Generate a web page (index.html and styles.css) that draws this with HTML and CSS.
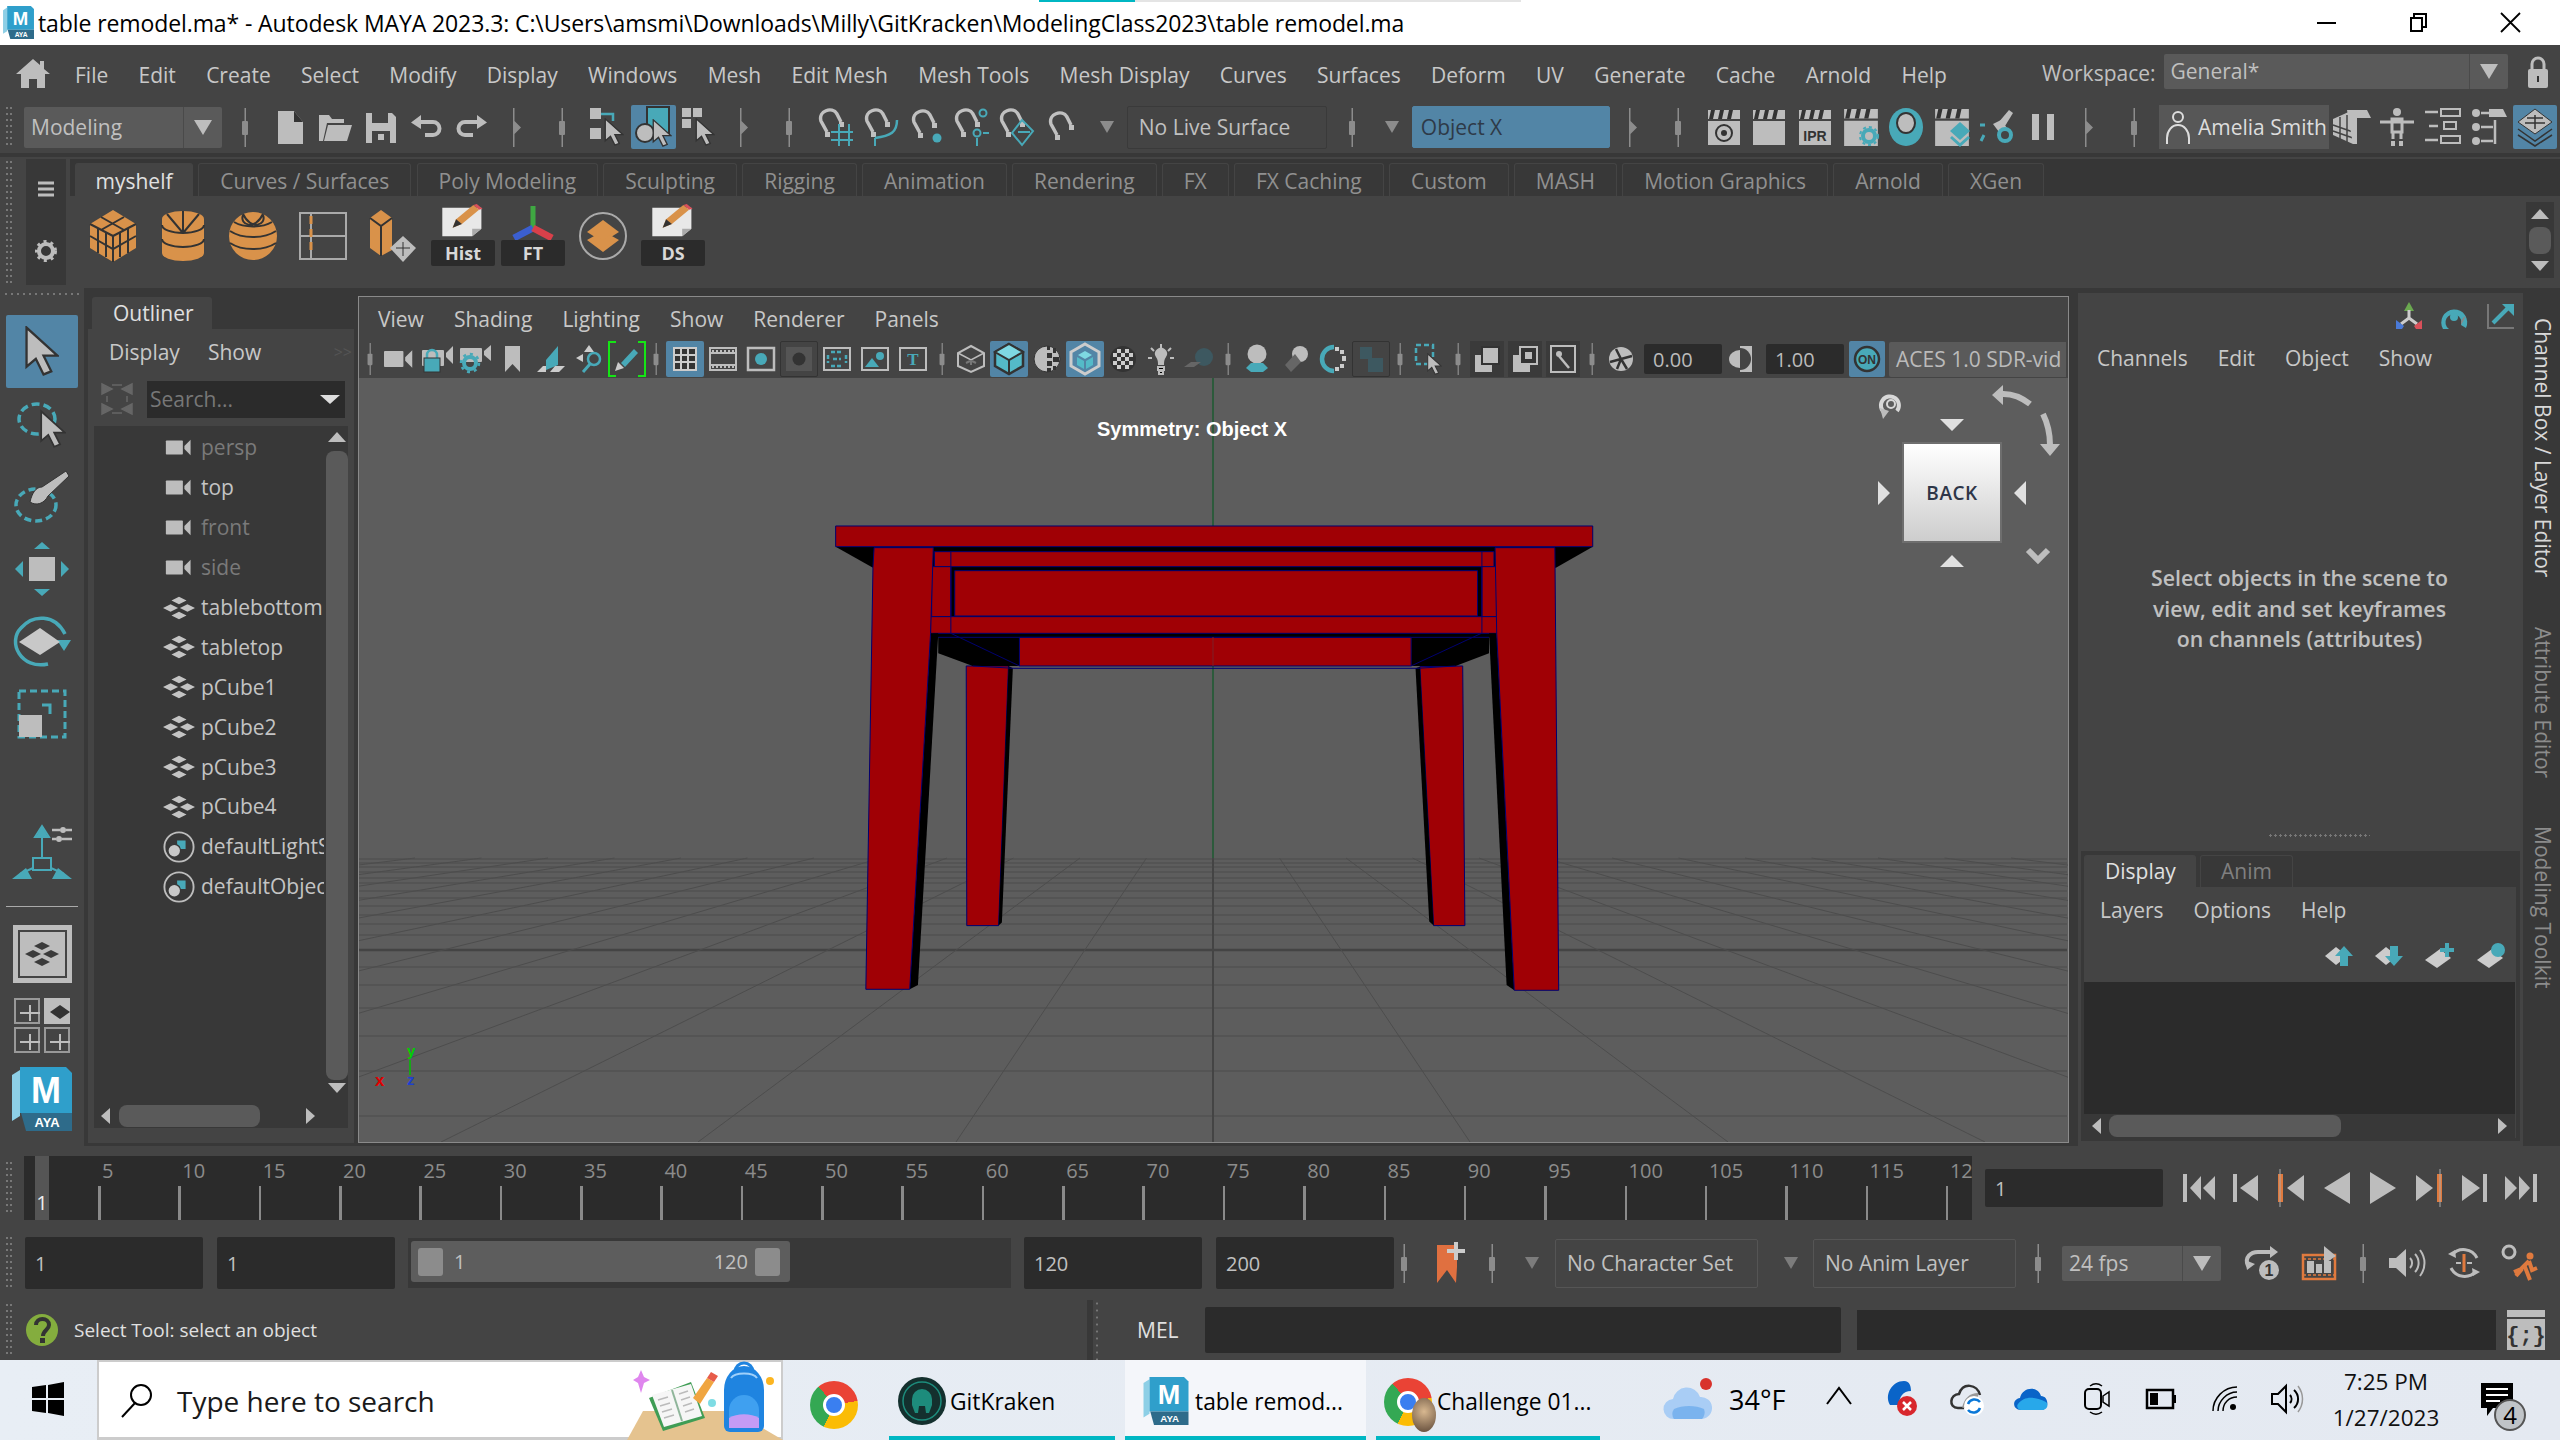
FILE: index.html
```
<!DOCTYPE html>
<html lang="en">
<head>
<meta charset="utf-8">
<title>table remodel.ma - Autodesk MAYA</title>
<link rel="stylesheet" href="styles.css">
</head>
<body>
<svg class="defs" width="0" height="0">
  <symbol id="sep" viewBox="0 0 6 39"><rect x="2.5" width="1.5" height="39" fill="#8c8c8c"/><rect y="13" width="6" height="14" rx="1" fill="#8c8c8c"/></symbol>
  <symbol id="chev" viewBox="0 0 8 39"><path d="M0 0h1.5v13L8 19.500 1.500 26v13H0z" fill="#8c8c8c"/></symbol>
  <symbol id="arrow" viewBox="0 0 22 32"><path d="M1 1v25l6-5 5 10 5-2-5-10h9z" fill="#bdbdbd" stroke="#333" stroke-width="1.500"/></symbol>
  <symbol id="magnet" viewBox="0 0 28 30"><path d="M10 24 4 13C1 3 15-2 20 6l4 8" fill="none" stroke="#c0c0c0" stroke-width="3.500"/><path d="M8 24h5v5H8zM22 14h5v5h-5z" fill="#c0c0c0"/></symbol>
  <symbol id="clap" viewBox="0 0 34 36"><path d="M1 1h32v9H1z" fill="#bdbdbd"/><path d="M4 1 2 10h4l2-9zM13 1l-2 9h4l2-9zM22 1l-2 9h4l2-9z" fill="#333"/><path d="M1 12h32v24H1z" fill="#bdbdbd"/></symbol>
  <symbol id="cam" viewBox="0 0 34 22"><rect y="2" width="22" height="18" rx="1" fill="#bdbdbd"/><path d="M32 1v20l-8-8v-4z" fill="#bdbdbd"/></symbol>
  <symbol id="xform" viewBox="0 0 34 24"><path d="M17 0l8 4-8 4-8-4zM8 8l8 4-8 4-8-4zM26 8l8 4-8 4-8-4zM17 16l8 4-8 4-8-4z" fill="#c4c4c4"/></symbol>
  <symbol id="set" viewBox="0 0 34 34"><circle cx="17" cy="17" r="15.500" fill="none" stroke="#bdbdbd" stroke-width="2"/><circle cx="12" cy="21" r="6" fill="#c8c8c8"/><path d="M15 10h9v9h-5a7 7 0 0 0-4-5z" fill="#48a9b8"/></symbol>
  <symbol id="maya" viewBox="0 0 60 64"><path d="M0 8 8 3v46l-8 5z" fill="#8dcfe6"/><path d="M8 0h46l6 6v40H8z" fill="#2f9fcb"/><path d="M9 46h51v18H14z" fill="#2e6b8a"/><text x="34" y="36" class="mayam">M</text><text x="35" y="60" class="mayaa">AYA</text></symbol>
  <symbol id="pencil" viewBox="0 0 40 38" preserveAspectRatio="none"><path d="M2 4h34v22l-8 8H2z" fill="#e8e8e8"/><path d="M28 34v-8h8z" fill="#aaa"/><path d="M11 25l3-9L29 1l5 5-15 15z" fill="#d9924a"/><path d="M29 1l3-1 5 5-3 1z" fill="#d8505a"/><path d="M11 25l3-9 5 5z" fill="#333"/></symbol>
</svg>

<header class="title">
  <svg class="title-logo" width="31" height="33"><use href="#maya"/></svg>
  <span class="title-text">table remodel.ma* - Autodesk MAYA 2023.3: C:\Users\amsmi\Downloads\Milly\GitKracken\ModelingClass2023\table remodel.ma</span>
  <div class="winbtns">
    <svg width="21" height="21"><path d="M1 11h19" stroke="#000" stroke-width="2"/></svg>
    <svg width="21" height="21"><path d="M3 6h11v13H3zM6 6V2h12v13h-4" fill="none" stroke="#000" stroke-width="2"/></svg>
    <svg width="21" height="21"><path d="M1 1l19 19M20 1 1 20" stroke="#000" stroke-width="1.800"/></svg>
  </div>
</header>
<div class="tabstrip"><i class="strip-a"></i><i class="strip-b"></i></div>

<nav class="menubar">
  <svg class="home" width="34" height="30"><path d="M17 1 0 16h5v14h8v-9h8v9h8V16h5l-6-5V3h-4v4z" fill="#bdbdbd"/></svg>
  <div class="menus"><span>File</span><span>Edit</span><span>Create</span><span>Select</span><span>Modify</span><span>Display</span><span>Windows</span><span>Mesh</span><span>Edit Mesh</span><span>Mesh Tools</span><span>Mesh Display</span><span>Curves</span><span>Surfaces</span><span>Deform</span><span>UV</span><span>Generate</span><span>Cache</span><span>Arnold</span><span>Help</span></div>
  <span class="ws-label">Workspace:</span>
  <div class="combo ws"><span>General*</span><b><i class="tri"></i></b></div>
  <svg class="lock" width="20" height="32"><path d="M4 15V8a6 6 0 0 1 12 0v7" fill="none" stroke="#bdbdbd" stroke-width="3"/><rect y="13" width="20" height="19" rx="2" fill="#bdbdbd"/><rect x="9" y="20" width="2" height="6" fill="#333"/></svg>
</nav>

<div class="status">
  <i class="grip"></i>
  <div class="combo mode"><span>Modeling</span><b><i class="tri"></i></b></div>
  <div class="slots a">
    <div class="s"><svg width="6" height="39"><use href="#sep"/></svg></div>
    <div class="s"><svg width="25" height="33"><path d="M0 0h16l9 11v22H0z" fill="#bdbdbd"/><path d="M16 0v11h9z" fill="#333"/></svg></div>
    <div class="s"><svg width="34" height="30"><path d="M1 29V3h10l3 4h12v4H9L5 29z" fill="#bdbdbd"/><path d="M10 13h24l-5 16H6z" fill="#bdbdbd"/></svg></div>
    <div class="s"><svg width="30" height="32"><path d="M0 2h26l4 4v26H0z" fill="#bdbdbd"/><path d="M6 2h16v10H6z" fill="#444"/><path d="M6 20h18v12H6z" fill="#444"/><path d="M12 23h6v6h-6z" fill="#bdbdbd"/></svg></div>
    <div class="s"><svg width="33" height="24"><path d="M11 0v5h12a8.500 8.500 0 0 1 0 17h-8v-4h8a4.500 4.500 0 0 0 0-9H11v5L1 7.500z" fill="#bdbdbd"/></svg></div>
    <div class="s"><svg width="33" height="24"><path d="M22 0v5H10a8.500 8.500 0 0 0 0 17h8v-4h-8a4.500 4.500 0 0 1 0-9h12v5l10-6.500z" fill="#bdbdbd"/></svg></div>
    <div class="s"><svg width="8" height="39"><use href="#chev"/></svg></div>
    <div class="s"><svg width="6" height="39"><use href="#sep"/></svg></div>
    <div class="s"><svg width="36" height="38"><rect width="11" height="11" fill="#bdbdbd"/><rect y="20" width="11" height="11" fill="#bdbdbd"/><path d="M11 6h12v7" fill="none" stroke="#48a9b8" stroke-width="2.500"/><use href="#arrow" x="14" y="10" width="20" height="28"/></svg></div>
    <div class="s on"><svg width="38" height="40"><rect x="13" width="22" height="28" fill="#48a9b8" stroke="#333" stroke-width="2"/><circle cx="11" cy="26" r="9" fill="#bdbdbd" stroke="#333" stroke-width="2"/><use href="#arrow" x="18" y="12" width="20" height="28"/></svg></div>
    <div class="s"><svg width="34" height="38"><rect width="9" height="9" fill="#bdbdbd"/><rect x="11" width="9" height="9" fill="#bdbdbd"/><rect y="11" width="9" height="9" fill="#bdbdbd"/><use href="#arrow" x="13" y="10" width="20" height="28"/></svg></div>
    <div class="s"><svg width="8" height="39"><use href="#chev"/></svg></div>
    <div class="s"><svg width="6" height="39"><use href="#sep"/></svg></div>
    <div class="s"><svg width="36" height="38"><use href="#magnet" width="28" height="30"/><path d="M22 16v22M32 16v22M14 24h22M14 32h22" stroke="#48a9b8" stroke-width="2" fill="none"/></svg></div>
    <div class="s"><svg width="34" height="38"><use href="#magnet" width="28" height="30"/><path d="M34 12c0 12-6 16-22 18" stroke="#48a9b8" stroke-width="2.500" fill="none"/><path d="M12 30v8" stroke="#48a9b8" stroke-width="2"/></svg></div>
    <div class="s"><svg width="32" height="36"><use href="#magnet" width="28" height="30"/><circle cx="27" cy="29" r="4.500" fill="#48a9b8"/></svg></div>
    <div class="s"><svg width="36" height="38"><use href="#magnet" width="28" height="30"/><circle cx="30" cy="5" r="3.500" fill="none" stroke="#48a9b8" stroke-width="2"/><circle cx="24" cy="25" r="3.500" fill="none" stroke="#48a9b8" stroke-width="2"/><path d="M30 25h6M24 30v8" stroke="#48a9b8" stroke-width="2"/></svg></div>
    <div class="s"><svg width="36" height="38"><use href="#magnet" width="28" height="30"/><path d="M24 12l11 11-11 14-10-12zM20 24h12" fill="none" stroke="#48a9b8" stroke-width="2"/></svg></div>
    <div class="s"><svg width="30" height="32"><use href="#magnet" width="28" height="30"/></svg></div>
    <div class="s"><i class="tri small"></i></div>
  </div>
  <div class="box nolive">No Live Surface</div>
  <div class="slot-sep"><svg width="6" height="39"><use href="#sep"/></svg></div>
  <i class="tri small"></i>
  <div class="box objx">Object X</div>
  <div class="slots b">
    <div class="s"><svg width="8" height="39"><use href="#chev"/></svg></div>
    <div class="s"><svg width="6" height="39"><use href="#sep"/></svg></div>
    <div class="s"><svg width="34" height="36"><use href="#clap"/><circle cx="17" cy="24" r="8" fill="none" stroke="#333" stroke-width="2"/><circle cx="17" cy="24" r="3" fill="#333"/></svg></div>
    <div class="s"><svg width="34" height="36"><use href="#clap"/></svg></div>
    <div class="s"><svg width="34" height="36"><use href="#clap"/><text x="17" y="32" class="ipr">IPR</text></svg></div>
    <div class="s"><svg width="36" height="38"><use href="#clap"/><circle cx="26" cy="28" r="6" fill="none" stroke="#48a9b8" stroke-width="4"/><circle cx="26" cy="28" r="9" fill="none" stroke="#48a9b8" stroke-width="2" stroke-dasharray="3 3"/></svg></div>
    <div class="s"><svg width="34" height="38"><ellipse cx="17" cy="19" rx="17" ry="19" fill="#48a9b8"/><ellipse cx="17" cy="15" rx="9" ry="10" fill="#bdbdbd" stroke="#333" stroke-width="2"/></svg></div>
    <div class="s"><svg width="36" height="38"><use href="#clap"/><path d="M26 14l10 9-10 9-10-9z" fill="#48a9b8"/><path d="M17 29l9 8 9-8" fill="none" stroke="#48a9b8" stroke-width="3"/></svg></div>
    <div class="s"><svg width="36" height="38"><path d="M19 15 30 2l4 3-8 13z" fill="#bdbdbd"/><path d="M14 16l8-4 6 8-8 4z" fill="#bdbdbd"/><circle cx="26" cy="27" r="6" fill="none" stroke="#48a9b8" stroke-width="4"/><path d="M1 17h5M5 27l-3 6" stroke="#48a9b8" stroke-width="3"/></svg></div>
    <div class="s"><svg width="22" height="26"><path d="M0 0h7v26H0zM15 0h7v26h-7z" fill="#bdbdbd"/></svg></div>
    <div class="s"><svg width="8" height="39"><use href="#chev"/></svg></div>
    <div class="s"><svg width="6" height="39"><use href="#sep"/></svg></div>
  </div>
  <div class="user"><svg width="24" height="34"><circle cx="12" cy="7" r="5" fill="none" stroke="#ddd" stroke-width="2"/><path d="M1 34v-6a11 13 0 0 1 22 0v6" fill="none" stroke="#ddd" stroke-width="2"/></svg><span>Amelia Smith</span></div>
  <div class="slots c">
    <div class="s"><svg width="38" height="38"><path d="M0 11 20 2v34L0 27z" fill="#bdbdbd"/><path d="M0 17l20 7M0 23l20 7M7 9v24M14 7v28" stroke="#444" stroke-width="1.500"/><path d="M14 2h20l4 8H24v26h-4z" fill="#bdbdbd"/></svg></div>
    <div class="s"><svg width="34" height="38"><circle cx="17" cy="4" r="4" fill="#bdbdbd"/><path d="M0 14h34M12 11h10v13H12zM13 24v7M21 24v7" stroke="#bdbdbd" stroke-width="3" fill="none"/><rect x="11" y="33" width="4" height="5" fill="#bdbdbd"/><rect x="19" y="33" width="4" height="5" fill="#bdbdbd"/></svg></div>
    <div class="s"><svg width="36" height="38"><path d="M0 4h13M0 32h13M4 18h9" stroke="#bdbdbd" stroke-width="2.500"/><rect x="16" y="1" width="19" height="7" fill="none" stroke="#bdbdbd" stroke-width="2"/><rect x="16" y="28" width="19" height="7" fill="none" stroke="#bdbdbd" stroke-width="2"/><rect x="19" y="14" width="12" height="7" fill="none" stroke="#bdbdbd" stroke-width="2"/></svg></div>
    <div class="s"><svg width="36" height="38"><circle cx="5" cy="5" r="4" fill="#bdbdbd"/><circle cx="5" cy="19" r="4" fill="#bdbdbd"/><circle cx="5" cy="33" r="4" fill="#bdbdbd"/><path d="M10 5h10M10 19h12M10 33h12M24 12v24" stroke="#bdbdbd" stroke-width="2.500"/><path d="M18 1h14l4 8H18z" fill="#bdbdbd"/></svg></div>
    <div class="s on wide"><svg width="36" height="38"><path d="M18 1l17 13-17 12L1 14z" fill="#bdbdbd" stroke="#333"/><path d="M1 21l17 12 17-12M1 27l17 11 17-11M10 10h16M8 15h20M18 7v14" fill="none" stroke="#333" stroke-width="1.500"/></svg></div>
  </div>
</div>
<div class="rule"></div>

<section class="shelf">
  <i class="grip tall"></i>
  <div class="shelf-side">
    <svg width="16" height="16"><path d="M0 2h16M0 8h16M0 14h16" stroke="#bdbdbd" stroke-width="3"/></svg>
    <svg width="22" height="22"><circle cx="11" cy="11" r="7" fill="none" stroke="#bdbdbd" stroke-width="4"/><circle cx="11" cy="11" r="9.500" fill="none" stroke="#bdbdbd" stroke-width="3" stroke-dasharray="3 4"/></svg>
  </div>
  <div class="shelf-main">
    <div class="tabs"><span class="tab on">myshelf</span><span class="tab">Curves / Surfaces</span><span class="tab">Poly Modeling</span><span class="tab">Sculpting</span><span class="tab">Rigging</span><span class="tab">Animation</span><span class="tab">Rendering</span><span class="tab">FX</span><span class="tab">FX Caching</span><span class="tab">Custom</span><span class="tab">MASH</span><span class="tab">Motion Graphics</span><span class="tab">Arnold</span><span class="tab">XGen</span></div>
    <div class="shelf-body">
      <div class="shelf-icons">
        <div class="sh"><svg width="46" height="52"><path d="M23 0 46 14v24L23 52 0 38V14z" fill="#d9924a"/><path d="M23 26 0 14M23 26l23-12M23 26v26M11 7l23 13M34 7 11 20M8 19v24M16 23v24M38 19v24M30 23v24M0 26l23 13 23-13" stroke="#333" stroke-width="2" fill="none"/></svg></div>
        <div class="sh"><svg width="42" height="50"><path d="M0 8a21 8 0 0 1 42 0v34a21 8 0 0 1-42 0z" fill="#d9924a"/><path d="M0 14a21 8 0 0 0 42 0M0 28a21 8 0 0 0 42 0M21 0v22M5 3l16 19M37 3 21 22" stroke="#333" stroke-width="2" fill="none"/></svg></div>
        <div class="sh"><svg width="48" height="48"><ellipse cx="24" cy="24" rx="24" ry="24" fill="#d9924a"/><path d="M1 19c12 8 34 8 46 0M1 31c12 8 34 8 46 0M5 10c10 6 28 6 38 0M14 3c-4 10 12 16 20-1M34 3C38 13 22 19 14 2" stroke="#333" stroke-width="2" fill="none"/></svg></div>
        <div class="sh"><svg width="48" height="48"><path d="M1 1h46v46H1zM12 1v46M1 24h46" fill="none" stroke="#aaa" stroke-width="2"/><path d="M12 4v8M12 17v8M12 30v8" stroke="#d9924a" stroke-width="3"/></svg></div>
        <div class="sh"><svg width="46" height="52"><path d="M0 8 11 0l11 8v32L11 46 0 38z" fill="#d9924a"/><path d="M0 8l11 8 11-8M11 16v30" stroke="#333" stroke-width="2" fill="none"/><path d="M33 26l13 12-13 14-13-14z" fill="#bdbdbd"/><path d="M26 38h14M33 32v14" stroke="#333"/></svg></div>
        <div class="sh tool"><svg width="46" height="36"><use href="#pencil" width="46" height="36"/></svg><b>Hist</b></div>
        <div class="sh tool"><svg width="46" height="36"><path d="M23 2v22" stroke="#3fa842" stroke-width="5"/><path d="M23 24 4 34" stroke="#3b5fd0" stroke-width="7"/><path d="M23 24l19 10" stroke="#d9404a" stroke-width="7"/></svg><b>FT</b></div>
        <div class="sh"><svg width="48" height="48"><circle cx="24" cy="24" r="23" fill="none" stroke="#aaa" stroke-width="2"/><path d="M24 8l16 12-16 10L8 20z" fill="#d9924a"/><path d="M8 28l16 12 16-12-9-5-7 5-7-5z" fill="#d9924a"/></svg></div>
        <div class="sh tool"><svg width="46" height="36"><use href="#pencil" width="46" height="36"/></svg><b>DS</b></div>
      </div>
      <div class="shelf-scroll"><i class="up"></i><b></b><i class="down"></i></div>
    </div>
  </div>
</section>

<main class="main">
  <aside class="toolbox">
    <div class="grip-h"></div>
    <div class="tool-cell on"><svg width="34" height="50" viewBox="0 0 22 32" preserveAspectRatio="none"><use href="#arrow"/></svg></div>
    <div class="tool-cell"><svg width="50" height="54"><ellipse cx="20" cy="22" rx="18" ry="15" fill="none" stroke="#48a9b8" stroke-width="3.500" stroke-dasharray="8 4"/><use href="#arrow" x="23" y="10" width="26" height="44"/></svg></div>
    <div class="tool-cell"><svg width="56" height="54"><ellipse cx="22" cy="36" rx="20" ry="16" fill="none" stroke="#48a9b8" stroke-width="3.500" stroke-dasharray="7 4"/><path d="M16 33c6 4 14 2 18-6l21-20-3-5-24 16c-6 0-10 6-12 15z" fill="#bdbdbd" stroke="#333"/></svg></div>
    <div class="tool-cell"><svg width="56" height="56"><rect x="15" y="16" width="26" height="24" fill="#bdbdbd"/><path d="M28 1l8 7H20zM28 55l8-7H20zM1 28l8-8v16zM55 28l-8-8v16z" fill="#48a9b8"/></svg></div>
    <div class="tool-cell"><svg width="58" height="56"><path d="M35 50C8 56-6 28 8 14 20 0 42 0 52 20" fill="none" stroke="#48a9b8" stroke-width="3.500"/><path d="M44 26h14l-7 11z" fill="#48a9b8"/><path d="M27 14l20 14-20 13L6 28z" fill="#c8c8c8"/></svg></div>
    <div class="tool-cell"><svg width="50" height="50"><rect x="2" y="2" width="46" height="46" fill="none" stroke="#48a9b8" stroke-width="3" stroke-dasharray="7 4"/><rect x="2" y="26" width="23" height="22" fill="#bdbdbd"/><path d="M25 16h8v9" fill="none" stroke="#48a9b8" stroke-width="3"/></svg></div>
    <div class="tool-cell uni"><svg width="60" height="54"><path d="M30 0l7 11H23zM30 11v20M21 32h18v12H21zM21 42 8 48M39 42l13 6" stroke="#48a9b8" stroke-width="2" fill="none"/><path d="M30 0l6 11H24zM0 53l14-11 6 11zM60 53 46 42l-6 11z" fill="#48a9b8"/><path d="M40 4h8M54 4h6M40 13h4M50 13h10" stroke="#bdbdbd" stroke-width="2.500"/><circle cx="51" cy="4" r="3" fill="#bdbdbd"/><circle cx="47" cy="13" r="3" fill="#bdbdbd"/></svg></div>
    <div class="tool-rule"></div>
    <div class="objmode"><svg width="34" height="24"><use href="#xform"/></svg></div>
    <div class="quad"><span><svg width="20" height="16"><path d="M10 0v16M0 8h20" stroke="#bdbdbd" stroke-width="2"/></svg></span><span class="lit"><svg width="20" height="14"><path d="M10 0l10 7-10 7L0 7z" fill="#333"/></svg></span><span><svg width="20" height="16"><path d="M10 0v16M0 8h20" stroke="#bdbdbd" stroke-width="2"/></svg></span><span><svg width="20" height="16"><path d="M10 0v16M0 8h20" stroke="#bdbdbd" stroke-width="2"/></svg></span></div>
    <svg class="logo" width="60" height="64"><use href="#maya"/></svg>
  </aside>

  <section class="outliner">
    <div class="ol-tab">Outliner</div>
    <div class="ol-panel">
      <div class="ol-menu"><span>Display</span><span>Show</span><em>&gt;&gt;</em></div>
      <div class="ol-search">
        <svg width="30" height="30"><path d="M0 0l10 5-10 5zM30 0 20 5l10 5zM0 20l10 5-10 5zM30 20l-10 5 10 5zM5 12v6M25 12v6M10 1h10M10 29h10" fill="#666" stroke="#666" stroke-width="1.500"/></svg>
        <div class="searchbox"><span>Search...</span><i class="tri light"></i></div>
      </div>
      <div class="ol-list">
        <ul class="rows">
          <li class="dim"><svg width="32" height="17"><use href="#cam"/></svg><span>persp</span></li>
          <li><svg width="32" height="17"><use href="#cam"/></svg><span>top</span></li>
          <li class="dim"><svg width="32" height="17"><use href="#cam"/></svg><span>front</span></li>
          <li class="dim"><svg width="32" height="17"><use href="#cam"/></svg><span>side</span></li>
          <li><svg width="32" height="24"><use href="#xform"/></svg><span>tablebottom</span></li>
          <li><svg width="32" height="24"><use href="#xform"/></svg><span>tabletop</span></li>
          <li><svg width="32" height="24"><use href="#xform"/></svg><span>pCube1</span></li>
          <li><svg width="32" height="24"><use href="#xform"/></svg><span>pCube2</span></li>
          <li><svg width="32" height="24"><use href="#xform"/></svg><span>pCube3</span></li>
          <li><svg width="32" height="24"><use href="#xform"/></svg><span>pCube4</span></li>
          <li><svg width="32" height="32"><use href="#set"/></svg><span>defaultLightS</span></li>
          <li><svg width="32" height="32"><use href="#set"/></svg><span>defaultObjec</span></li>
        </ul>
        <div class="vscroll"><i class="up"></i><b></b><i class="down"></i></div>
        <div class="hscroll"><i class="left"></i><b></b><i class="right"></i></div>
      </div>
    </div>
  </section>

  <section class="viewpanel">
    <div class="vp-menu"><span>View</span><span>Shading</span><span>Lighting</span><span>Show</span><span>Renderer</span><span>Panels</span></div>
    <div class="vp-tools">
      <div class="d"><svg width="6" height="32"><use href="#sep" width="6" height="32"/></svg></div>
      <div class="v"><svg width="30" height="22"><use href="#cam" width="30" height="22"/></svg></div>
      <div class="v"><svg width="32" height="30"><rect x="1" y="6" width="22" height="16" rx="1" fill="#bdbdbd"/><path d="M32 2v18l-7-7V9z" fill="#bdbdbd"/><path d="M6 14v-3a5 5 0 0 1 10 0v3" fill="none" stroke="#48a9b8" stroke-width="2.500"/><rect x="3" y="14" width="16" height="14" fill="#48a9b8" stroke="#333"/></svg></div>
      <div class="v"><svg width="32" height="30"><rect x="1" y="4" width="22" height="14" rx="1" fill="#bdbdbd"/><path d="M32 1v16l-7-6V7z" fill="#bdbdbd"/><circle cx="11" cy="19" r="6" fill="none" stroke="#48a9b8" stroke-width="4"/><circle cx="11" cy="19" r="9" fill="none" stroke="#48a9b8" stroke-width="2.500" stroke-dasharray="3 4"/></svg></div>
      <div class="v"><svg width="16" height="26"><path d="M0 0h15v26l-7.500-8L0 26z" fill="#bdbdbd"/></svg></div>
      <div class="v"><svg width="30" height="26"><path d="M10 14 22 0v19l-12 5z" fill="#48a9b8"/><path d="M1 26l6-6h3v6zM14 26l5-6h10l-6 6z" fill="#ccc"/></svg></div>
      <div class="v"><svg width="28" height="30"><path d="M9 8l5-7 5 7zM1 14l7-4v8z" fill="#ccc"/><circle cx="19" cy="15" r="6" fill="none" stroke="#48a9b8" stroke-width="2.500"/><path d="M15 20l-7 8" stroke="#48a9b8" stroke-width="3"/></svg></div>
      <div class="v lit"><svg width="26" height="26"><path d="M7 17 20 3l4 4-13 14z" fill="#48a9b8"/><path d="M1 25l3-9 6 6z" fill="#ccc"/></svg></div>
      <div class="d"><svg width="6" height="32"><use href="#sep" width="6" height="32"/></svg></div>
      <div class="v on"><svg width="26" height="26"><rect x="1" y="1" width="24" height="24" fill="#333"/><path d="M2 2h22v22H2zM9 2v22M16 2v22M2 9h22M2 16h22" fill="none" stroke="#ccc" stroke-width="2"/></svg></div>
      <div class="v"><svg width="28" height="24"><rect x="1" y="1" width="26" height="22" fill="none" stroke="#bdbdbd" stroke-width="2"/><path d="M2 6h24M2 18h24" stroke="#bdbdbd" stroke-width="2"/><path d="M3 4h22M3 20h22" stroke="#bdbdbd" stroke-width="2" stroke-dasharray="2 2"/></svg></div>
      <div class="v"><svg width="28" height="24"><rect x="1" y="1" width="26" height="22" fill="none" stroke="#bdbdbd" stroke-width="2.500"/><circle cx="14" cy="12" r="6" fill="#48a9b8"/></svg></div>
      <div class="v off"><svg width="26" height="24"><rect width="26" height="24" fill="#555"/><circle cx="13" cy="12" r="6.500" fill="#333"/></svg></div>
      <div class="v"><svg width="28" height="24"><rect x="1" y="1" width="26" height="22" fill="none" stroke="#bdbdbd" stroke-width="2"/><path d="M8 5h12M8 19h12M5 8v8M23 8v8M10 12h8" stroke="#48a9b8" stroke-width="2.500" stroke-dasharray="4 2"/></svg></div>
      <div class="v"><svg width="28" height="24"><rect x="1" y="1" width="26" height="22" fill="none" stroke="#bdbdbd" stroke-width="2"/><path d="M4 20l7-9 7 9z" fill="#48a9b8"/><circle cx="19" cy="9" r="4" fill="#48a9b8"/></svg></div>
      <div class="v"><svg width="28" height="24"><rect x="1" y="1" width="26" height="22" fill="none" stroke="#bdbdbd" stroke-width="2"/><text x="14" y="18" class="tee">T</text></svg></div>
      <div class="d"><svg width="6" height="32"><use href="#sep" width="6" height="32"/></svg></div>
      <div class="v"><svg width="28" height="28"><path d="M14 1l13 7v13l-13 6-13-6V8z" fill="none" stroke="#bdbdbd" stroke-width="2"/><path d="M1 8l13 7 13-7" fill="none" stroke="#bdbdbd" stroke-width="1.500"/><path d="M14 15v5M9 18l4-2M19 18l-4-2" stroke="#777" stroke-width="2"/></svg></div>
      <div class="v on"><svg width="30" height="32"><path d="M15 1l14 8v14l-14 8-14-8V9z" fill="#54bac8" stroke="#333" stroke-width="2.500"/><path d="M15 1l14 8-14 8L1 9z" fill="#7ed8e2" stroke="#333" stroke-width="2"/><path d="M15 17v14" stroke="#333" stroke-width="2"/></svg></div>
      <div class="v"><svg width="28" height="28"><circle cx="14" cy="14" r="13" fill="#bdbdbd" stroke="#333"/><path d="M14 1h3v4h-3zM20 3h3v5h-3zM14 8h5v5h-5zM20 12h6v5h-6zM14 16h5v5h-5zM20 21h3v4h-3zM14 23h4v4h-4z" fill="#333"/></svg></div>
      <div class="v on"><svg width="30" height="32"><path d="M15 1l14 8v14l-14 8-14-8V9z" fill="none" stroke="#ccc" stroke-width="3"/><path d="M15 8l7 4-7 4-7-4z" fill="#7ed8e2"/><path d="M7 14l7 4v8l-7-4zM23 14l-7 4v8l7-4z" fill="#54bac8"/></svg></div>
      <div class="v"><svg width="28" height="28"><circle cx="14" cy="14" r="13" fill="#333"/><path d="M8 4h4v4H8zM16 4h4v4h-4zM4 8h4v4H4zM12 8h4v4h-4zM20 8h4v4h-4zM8 12h4v4H8zM16 12h4v4h-4zM4 16h4v4H4zM12 16h4v4h-4zM20 16h4v4h-4zM8 20h4v4H8zM16 20h4v4h-4z" fill="#ccc"/></svg></div>
      <div class="v"><svg width="26" height="30"><path d="M8 13a6 6 0 1 1 10 0c-2 3-2 5-2 8h-6c0-3 0-5-2-8z" fill="#bdbdbd"/><path d="M10 23h6v3h-6zM11 27h4v3h-4zM13 0v4M3 4l3 3M23 4l-3 3M0 14h4M22 14h4" stroke="#bdbdbd" stroke-width="2"/></svg></div>
      <div class="v"><svg width="30" height="24"><circle cx="20" cy="10" r="9" fill="#3d5860"/><path d="M0 20l7-5h10l-7 5z" fill="#666"/></svg></div>
      <div class="d"><svg width="6" height="32"><use href="#sep" width="6" height="32"/></svg></div>
      <div class="v"><svg width="28" height="30"><circle cx="14" cy="10" r="9.500" fill="#bdbdbd"/><path d="M3 24l5-5h12l5 5-5 4H8z" fill="#48a9b8"/></svg></div>
      <div class="v"><svg width="28" height="28"><circle cx="19" cy="9" r="8" fill="#bdbdbd"/><path d="M4 20 14 9 20 17 10 27z" fill="#666"/></svg></div>
      <div class="v"><svg width="26" height="28"><path d="M14 2A12 12 0 0 0 14 26" fill="none" stroke="#48a9b8" stroke-width="4.500"/><path d="M15 2h4v4h-4zM20 5h4v4h-4zM22 11h4v5h-4zM20 19h4v4h-4zM15 22h4v4h-4z" fill="#ccc"/></svg></div>
      <div class="v off"><svg width="26" height="26"><rect x="2" y="1" width="12" height="12" fill="#3d5860"/><rect x="10" y="12" width="15" height="14" fill="#3d5860"/></svg></div>
      <div class="d"><svg width="6" height="32"><use href="#sep" width="6" height="32"/></svg></div>
      <div class="v"><svg width="28" height="32"><rect x="1" y="2" width="17" height="19" fill="none" stroke="#48a9b8" stroke-width="2.500" stroke-dasharray="5 3"/><use href="#arrow" x="12" y="10" width="15" height="22"/></svg></div>
      <div class="d"><svg width="6" height="32"><use href="#sep" width="6" height="32"/></svg></div>
      <div class="v dark"><svg width="26" height="28"><rect x="1" y="10" width="17" height="17" fill="#bdbdbd"/><rect x="8" y="2" width="17" height="17" fill="#bdbdbd" stroke="#333" stroke-width="2"/></svg></div>
      <div class="v dark"><svg width="26" height="28"><rect x="1" y="10" width="17" height="17" fill="#bdbdbd"/><rect x="8" y="2" width="17" height="17" fill="#333" stroke="#bdbdbd" stroke-width="2"/><rect x="13" y="7" width="7" height="7" fill="#bdbdbd"/></svg></div>
      <div class="v dark"><svg width="26" height="28"><rect x="1" y="1" width="24" height="26" fill="none" stroke="#bdbdbd" stroke-width="2"/><circle cx="9" cy="9" r="3" fill="#bdbdbd"/><path d="M9 11l10 12" stroke="#bdbdbd" stroke-width="2.500"/></svg></div>
      <div class="d"><svg width="6" height="32"><use href="#sep" width="6" height="32"/></svg></div>
      <div class="v"><svg width="26" height="28"><circle cx="13" cy="14" r="12" fill="#bdbdbd"/><path d="M13 14 8 4M13 14l11-3M13 14l6 10M13 14 2 17M13 14l-4 10" stroke="#333" stroke-width="2.500"/></svg></div>
      <div class="val">0.00</div>
      <div class="v half"><svg width="26" height="30"><path d="M13 6a11 9 0 0 0 0 18z" fill="#bdbdbd"/><rect x="13" y="2" width="12" height="26" fill="#bdbdbd"/><path d="M13 4a11 11 0 0 1 0 22z" fill="#444"/></svg></div>
      <div class="val">1.00</div>
      <div class="onbtn"><svg width="28" height="28"><circle cx="14" cy="14" r="12" fill="#48a9b8" stroke="#333" stroke-width="2.500"/><text x="14" y="19" class="ontxt">ON</text></svg></div>
      <div class="aces"><span>ACES 1.0 SDR-vid</span></div>
    </div>
    <div class="view">
      <svg class="scene" width="1708" height="764" viewBox="359 378 1708 764">
        <g class="hz"><path d="M359 859H2067M359 863H2067M359 867H2067M359 872H2067M359 878H2067M359 883H2067M359 891H2067M359 898H2067M359 906H2067M359 915H2067M359 924H2067M359 935H2067M359 967H2067M359 985H2067M359 1008H2067M359 1036H2067M359 1071H2067M359 1116H2067"/><path class="thick" d="M359 950H2067"/></g>
        <g class="rad" id="rad"><path d="M1279.500 858 1470 1142M1346 858 1728 1142M1412.500 858 1985 1142M1479 858 2242 1142M1545.500 858 2500 1142M1612 858 2757 1142M1678.500 858 3014 1142M1745 858 3271 1142M1811.500 858 3529 1142M1878 858 3786 1142M1944.500 858 4043 1142M2011 858 4300 1142"/></g>
        <use href="#rad" transform="translate(2426 0) scale(-1 1)"/>
        <path class="axis-g" d="M1213 378V858"/>
        <path class="axis-k" d="M1213 858V1142"/>
        <g transform="translate(800 500) scale(.5486 .3333)">
          <path class="k" d="M65 140H1445L1378 203H133Z"/>
          <path class="k" d="M243 140H1267V412H243Z"/>
          <path class="r" d="M303 498H380L362 1277H304Z"/>
          <path class="k" d="M380 498 388 505 368 1268 362 1277Z"/>
          <path class="r" d="M1130 500 1208 498 1212 1277H1155Z"/>
          <path class="k" d="M1122 505 1130 500 1155 1277 1147 1265Z"/>
          <path class="k" d="M252 412H400V498H315L252 460Z"/>
          <path class="k" d="M1114 412H1256V460L1195 498H1114Z"/>
          <path class="r" d="M400 412H1114V498H400Z"/>
          <path class="n" d="M252 412H1256M275 400 400 498M1242 400 1114 498M315 498 390 505H1125L1195 498"/>
          <path class="r" d="M245 155H1265V200H245Z"/>
          <path class="r" d="M240 200H275V350H240Z"/>
          <path class="r" d="M1243 200H1270V350H1243Z"/>
          <path class="r" d="M282 212H1235V348H282Z"/>
          <path class="r" d="M238 350H1272V400H238Z"/>
          <path class="n" d="M275 155V400M1243 155V400"/>
          <path class="k" d="M238 400H252L215 1455 200 1468Z"/>
          <path class="k" d="M1256 400H1270L1302 1471 1288 1455Z"/>
          <path class="r" d="M135 143H243L238 400 200 1468H120L133 203Z"/>
          <path class="r" d="M1267 143H1376L1383 1471H1302L1270 400Z"/>
          <path class="r" d="M65 78H1445V140H65Z"/>
        </g>
        <path class="faint" d="M1213 637V666"/>
        <g class="cube-arrows">
          <path d="M1940 419h24l-12 12zM1940 567h24l-12-12zM1878 481l12 12-12 12zM2026 481l-12 12 12 12z"/>
          <path class="gr" d="M1992 395l11-10v20zM2040 444h20l-10 12z"/>
          <path class="ln" d="M2030 404Q2016 393 2001 394M2043 414Q2050 428 2050 445M2028 550l10 10 10-10"/>
          <path class="ring" d="M1885 413A9 9 0 1 1 1897 411"/>
          <circle class="ringc" cx="1891" cy="404" r="4"/>
          <path class="gr" d="M1880 408l9 3-6 8z"/>
        </g>
        <g class="gizmo">
          <text x="375" y="1086" class="ax-x">x</text>
          <text x="407" y="1056" class="ax-y">y</text>
          <text x="407" y="1085" class="ax-z">z</text>
          <path class="ax-gl" d="M410 1060V1075"/>
        </g>
      </svg>
      <div class="sym">Symmetry: Object X</div>
      <div class="cube"><span>BACK</span></div>
    </div>
  </section>

  <section class="rightpanel">
    <div class="cb">
      <div class="cb-icons">
        <svg width="28" height="28"><path d="M14 0l5 9H9z" fill="#6aa84f"/><path d="M14 8v8M14 16 6 22M14 16l8 6" stroke="#ccc" stroke-width="3"/><path d="M1 18l8 6-2 3H1z" fill="#4a7ad8"/><path d="M27 18l-8 6 2 3h6z" fill="#d9505a"/></svg>
        <svg width="30" height="28"><path d="M4 27A13 13 0 1 1 27 26l-5-3A8 8 0 1 0 10 27z" fill="#48a9b8"/><path d="M22 23A8 8 0 0 1 27 14" fill="#888"/><circle cx="15" cy="15" r="4" fill="#48a9b8"/></svg>
        <svg width="30" height="30"><path d="M8 21 25 4" stroke="#48a9b8" stroke-width="4"/><path d="M17 2h12v12z" fill="#48a9b8"/><path d="M3 2v24h26" fill="none" stroke="#777" stroke-width="2"/></svg>
      </div>
      <div class="cb-menu"><span>Channels</span><span>Edit</span><span>Object</span><span>Show</span></div>
      <p class="cb-msg">Select objects in the scene to<br>view, edit and set keyframes<br>on channels (attributes)</p>
      <div class="cb-dots"></div>
    </div>
    <div class="layers">
      <div class="lay-tabs"><span class="ltab on">Display</span><span class="ltab">Anim</span></div>
      <div class="lay-panel">
        <div class="lay-menu"><span>Layers</span><span>Options</span><span>Help</span></div>
        <div class="lay-icons">
          <svg width="28" height="22"><path d="M11 2 0 11l11 9 5-4V6z" fill="#ccc"/><path d="M19 1l9 10h-5v10h-8V11h-5z" fill="#48a9b8"/></svg>
          <svg width="28" height="22"><path d="M11 2 0 11l11 9 5-4V6z" fill="#ccc"/><path d="M19 21l9-10h-5V1h-8v10h-5z" fill="#48a9b8"/></svg>
          <svg width="30" height="26"><path d="M15 6 0 17l12 8 14-10z" fill="#ccc"/><path d="M22 0v14M15 7h14" stroke="#48a9b8" stroke-width="4"/></svg>
          <svg width="28" height="26"><path d="M15 6 0 17l12 8 14-10z" fill="#ccc"/><circle cx="21" cy="7" r="7" fill="#48a9b8"/></svg>
        </div>
        <div class="lay-list"></div>
        <div class="lay-scroll"><i class="left"></i><b></b><i class="right"></i></div>
      </div>
    </div>
  </section>

  <aside class="vtabs">
    <span class="vt on">Channel Box / Layer Editor</span>
    <span class="vt">Attribute Editor</span>
    <span class="vt">Modeling Toolkit</span>
  </aside>
</main>

<section class="timerow">
  <i class="grip short"></i>
  <div class="slider">
    <div class="cur">1</div>
    <div class="tk"><b>5</b><i></i></div><div class="tk"><b>10</b><i></i></div><div class="tk"><b>15</b><i></i></div><div class="tk"><b>20</b><i></i></div><div class="tk"><b>25</b><i></i></div><div class="tk"><b>30</b><i></i></div><div class="tk"><b>35</b><i></i></div><div class="tk"><b>40</b><i></i></div><div class="tk"><b>45</b><i></i></div><div class="tk"><b>50</b><i></i></div><div class="tk"><b>55</b><i></i></div><div class="tk"><b>60</b><i></i></div><div class="tk"><b>65</b><i></i></div><div class="tk"><b>70</b><i></i></div><div class="tk"><b>75</b><i></i></div><div class="tk"><b>80</b><i></i></div><div class="tk"><b>85</b><i></i></div><div class="tk"><b>90</b><i></i></div><div class="tk"><b>95</b><i></i></div><div class="tk"><b>100</b><i></i></div><div class="tk"><b>105</b><i></i></div><div class="tk"><b>110</b><i></i></div><div class="tk"><b>115</b><i></i></div><div class="tk"><b>12</b><i></i></div>
  </div>
  <div class="fld curframe">1</div>
  <div class="transport">
    <div class="p"><svg width="34" height="28"><path d="M1 0h4v28H1zM19 2v24L8 14zM33 2v24L21 14z" fill="#bdbdbd"/></svg></div>
    <div class="p"><svg width="26" height="28"><path d="M1 0h4v28H1zM26 1v26L8 14z" fill="#bdbdbd"/></svg></div>
    <div class="p"><svg width="28" height="38"><path d="M1 5h5v28H1z" fill="#e07a3e"/><path d="M3 0v38" stroke="#aaa"/><path d="M27 6v26L10 19z" fill="#bdbdbd"/></svg></div>
    <div class="p"><svg width="26" height="32"><path d="M26 0v32L0 16z" fill="#bdbdbd"/></svg></div>
    <div class="p"><svg width="26" height="32"><path d="M0 0v32l26-16z" fill="#bdbdbd"/></svg></div>
    <div class="p"><svg width="28" height="38"><path d="M22 5h5v28h-5z" fill="#e07a3e"/><path d="M25 0v38" stroke="#aaa"/><path d="M1 6v26l17-13z" fill="#bdbdbd"/></svg></div>
    <div class="p"><svg width="26" height="28"><path d="M21 0h4v28h-4zM0 1v26l18-13z" fill="#bdbdbd"/></svg></div>
    <div class="p"><svg width="34" height="28"><path d="M29 0h4v28h-4zM15 2v24l11-12zM1 2v24l12-12z" fill="#bdbdbd"/></svg></div>
  </div>
</section>

<section class="rangerow">
  <i class="grip short"></i>
  <div class="fld w178">1</div>
  <div class="fld w178">1</div>
  <div class="rangewrap">
    <div class="rangebar"><i class="hnd"></i><span>1</span><span class="end">120</span><i class="hnd"></i></div>
  </div>
  <div class="fld w178">120</div>
  <div class="fld w178">200</div>
  <div class="rs gap10"><svg width="6" height="39"><use href="#sep"/></svg></div>
  <div class="rs mark"><svg width="32" height="42"><path d="M2 3h20v22l-1 16-9-13-10 13z" fill="#e07040"/><path d="M21 0v18M12 9h18" stroke="#ccc" stroke-width="4"/></svg></div>
  <div class="rs gap10"><svg width="6" height="39"><use href="#sep"/></svg></div>
  <div class="rs tri-s"><i class="tri small hollow"></i></div>
  <div class="box charset">No Character Set</div>
  <div class="rs tri-s2"><i class="tri small hollow"></i></div>
  <div class="box charset">No Anim Layer</div>
  <div class="rs sep3"><svg width="6" height="39"><use href="#sep"/></svg></div>
  <div class="combo fps"><span>24 fps</span><b><i class="tri"></i></b></div>
  <div class="rs2 first"><svg width="36" height="34"><path d="M4 20c-4-9 3-14 10-14h14" fill="none" stroke="#bdbdbd" stroke-width="4"/><path d="M26 0l8 6-8 6zM1 14l10 4-8 6z" fill="#bdbdbd"/><circle cx="25" cy="24" r="10" fill="#bdbdbd"/><text x="25" y="30" class="loop1">1</text></svg></div>
  <div class="rs2"><svg width="34" height="34"><rect x="1" y="9" width="32" height="24" fill="none" stroke="#e07a3e" stroke-width="2.500"/><path d="M5 15h7v12H5zM14 18h6v9h-6zM22 15h7v12h-7z" fill="#bdbdbd"/><path d="M1 13h32M1 29h32" stroke="#e07a3e" stroke-width="1.500" stroke-dasharray="3 2"/><path d="M22 0l12 10-12 8z" fill="#bdbdbd"/></svg></div>
  <div class="rs2 short"><svg width="6" height="39"><use href="#sep"/></svg></div>
  <div class="rs2"><svg width="36" height="30"><path d="M0 10h7L17 1v28L7 20H0z" fill="#bdbdbd"/><path d="M21 10a7 7 0 0 1 0 10M26 6a13 13 0 0 1 0 18M31 2c6 8 6 18 0 26" fill="none" stroke="#bdbdbd" stroke-width="2"/></svg></div>
  <div class="rs2"><svg width="34" height="34"><path d="M30 12A15 15 0 0 0 5 9M4 22a15 15 0 0 0 25 3" fill="none" stroke="#bdbdbd" stroke-width="3"/><path d="M1 8l7-4 1 8zM33 26l-7 4-1-8z" fill="#bdbdbd"/><path d="M17 8v18" stroke="#e07a3e" stroke-width="3"/><path d="M9 17h16" stroke="#bdbdbd" stroke-width="2" stroke-dasharray="5 6"/></svg></div>
  <div class="rs2"><svg width="38" height="38"><circle cx="8" cy="8" r="6" fill="none" stroke="#bdbdbd" stroke-width="3"/><circle cx="29" cy="12" r="3.500" fill="#e07a3e"/><path d="M28 17l-8 8-7 3M28 17l3 9 5-2M24 23l5 13M21 25l-6 7" fill="none" stroke="#e07a3e" stroke-width="4"/></svg></div>
</section>

<section class="cmdrow">
  <i class="grip short"></i>
  <svg class="help" width="32" height="32"><circle cx="16" cy="16" r="16" fill="#84ad3e"/><path d="M10 11c0-8 13-8 13 0 0 5-6 5-6 11" fill="none" stroke="#333" stroke-width="4"/><rect x="14" y="24" width="5" height="5" fill="#333"/></svg>
  <span class="hint">Select Tool: select an object</span>
  <div class="cmd-split"><i class="grip short inrow"></i></div>
  <span class="mel">MEL</span>
  <div class="cmd-in"></div>
  <div class="cmd-out"></div>
  <svg class="script" width="38" height="40"><rect width="38" height="40" fill="#bdbdbd"/><path d="M0 8h38" stroke="#444" stroke-width="2"/><text x="19" y="32" class="brace">{;}</text></svg>
</section>

<footer class="taskbar">
  <svg class="win" width="32" height="34"><path d="M0 5l14-2v13H0zM16 3l16-3v16H16zM0 18h14v13L0 29zM16 18h16v16l-16-3z" fill="#000"/></svg>
  <div class="tsearch">
    <svg width="34" height="36"><circle cx="21" cy="13" r="10" fill="none" stroke="#000" stroke-width="2"/><path d="M15 21 2 35" stroke="#000" stroke-width="2"/></svg>
    <span>Type here to search</span>
    <svg class="illus" width="156" height="80"><path d="M0 80 16 51h90l50 29z" fill="#e5c38f"/><path d="M22 38 64 22l14 36-42 13z" fill="#3f9d55"/><path d="M25 35 64 24l11 32-38 11z" fill="#f6f6f6"/><path d="M45 30l10 31" stroke="#8fb59a" stroke-width="2"/><path d="M31 40l10-3M33 46l10-3M35 52l10-3M37 58l10-3M52 34l9-3M54 40l9-3M56 46l9-3M58 52l9-3" stroke="#bbb" stroke-width="1.500"/><path d="M66 38 80 18l7 4-14 22z" fill="#f0a540"/><path d="M80 18l4-6 7 4-4 6z" fill="#e75c4a"/><path d="M97 30a20 24 0 0 1 40 0v36a6 6 0 0 1-6 6h-28a6 6 0 0 1-6-6z" fill="#1f84e0"/><path d="M108 12a9 9 0 0 1 18 0" fill="none" stroke="#1f84e0" stroke-width="3"/><path d="M104 18c4-6 22-6 26 0" fill="none" stroke="#9fd0fa" stroke-width="2"/><path d="M102 68V50a15 15 0 0 1 30 0v18z" fill="#3fa0f0"/><path d="M102 68V58c8-5 22-5 30 0v10z" fill="#c49bf5"/><path d="M14 10l3 7 6 3-6 3-3 10-3-10-5-3 5-3z" fill="#df86ee"/><circle cx="143" cy="21" r="4" fill="#fcb520"/><circle cx="85" cy="43" r="4" fill="#7fdce4"/></svg>
  </div>
  <div class="chrome big"><i></i></div>
  <div class="task gk"><svg width="48" height="48"><circle cx="24" cy="24" r="24" fill="#14302e"/><path d="M14 22a10 10 0 0 1 20 0v6l-3 8h-3l-1-7h-6l-1 7h-3l-3-8z" fill="#1d8c7c"/><circle cx="24" cy="24" r="19" fill="none" stroke="#1d8c7c" stroke-width="1.500"/></svg><span>GitKraken</span></div>
  <div class="task active"><svg width="46" height="48"><use href="#maya" width="46" height="48"/></svg><span>table remod...</span></div>
  <div class="task cr"><div class="chrome"><i></i><em></em></div><span>Challenge 01...</span></div>
  <div class="tray">
    <svg class="weather" width="50" height="44"><path d="M10 42A10 10 0 0 1 9 22 14 14 0 0 1 36 20a11 11 0 0 1 2 22z" fill="#a9cdf5"/><path d="M10 42a9 9 0 0 1 0-10c8-4 22-4 30 0a10 10 0 0 1-2 10z" fill="#7ab3ee"/><circle cx="42" cy="7" r="6" fill="#d8322c"/></svg>
    <span class="temp">34°F</span>
    <svg class="caret" width="26" height="26"><path d="M1 20 13 4l12 16" fill="none" stroke="#000" stroke-width="2"/></svg>
    <svg class="ti t1" width="32" height="38"><path d="M4 25c-6-10 2-24 14-24 6 0 7 6 7 10-8 0-12 6-12 14z" fill="#0a64c8"/><circle cx="21" cy="26" r="10" fill="#d8272d"/><path d="M17 22l8 8M25 22l-8 8" stroke="#fff" stroke-width="2.500"/></svg>
    <svg class="ti t2" width="34" height="34"><path d="M14 26H8c-10 0-8-14 1-14 4-12 18-10 21 1" fill="none" stroke="#333" stroke-width="2.500"/><path d="M14 26c2-8 6-13 14-13" stroke="#999" stroke-width="4" fill="none"/><circle cx="24" cy="24" r="10" fill="#fff"/><path d="M18 22a7 7 0 0 1 12-2M30 26a7 7 0 0 1-12 2" fill="none" stroke="#0a78d8" stroke-width="2.500"/></svg>
    <svg class="ti t3" width="34" height="24"><path d="M7 23C-2 23-2 12 6 11 8 0 24-2 27 9c8 0 9 14 0 14z" fill="#0a64c8"/><path d="M7 23c-3 0-5-4-3-6 6-8 16-8 28-2 3 3 1 8-4 8z" fill="#28a8ea"/></svg>
    <svg class="ti t4" width="26" height="32"><rect x="1" y="6" width="16" height="20" rx="4" fill="none" stroke="#000" stroke-width="2"/><path d="M19 13l6-4v14l-6-4zM6 3c4-3 8-3 12 0M6 29c4 3 8 3 12 0" fill="none" stroke="#000" stroke-width="1.500"/></svg>
    <svg class="ti t5" width="30" height="20"><rect x="1" y="1" width="26" height="18" fill="none" stroke="#000" stroke-width="2.500"/><rect x="4" y="4" width="8" height="12" fill="#000"/><rect x="28" y="6" width="2" height="8" fill="#000"/></svg>
    <svg class="ti t6" width="26" height="26"><path d="M1 25C1 12 12 1 25 1M6 25C6 15 15 6 25 6M11 25c0-8 6-14 14-14" fill="none" stroke="#000" stroke-width="1.500"/><circle cx="21" cy="21" r="3" fill="#000"/></svg>
    <svg class="ti t7" width="32" height="30"><path d="M1 10h6l8-8v26l-8-8H1z" fill="none" stroke="#000" stroke-width="2"/><path d="M19 11a6 6 0 0 1 0 8M23 6a12 12 0 0 1 0 18" fill="none" stroke="#000" stroke-width="2"/><path d="M27 2c6 8 6 18 0 26" fill="none" stroke="#999" stroke-width="1.500"/></svg>
    <div class="clock"><span>7:25 PM</span><span>1/27/2023</span></div>
    <div class="notif"><svg width="32" height="34"><path d="M0 0h32v25H12l-6 8v-8H0z" fill="#000"/><path d="M5 6h22M5 12h22M5 18h14" stroke="#fff" stroke-width="2"/></svg><b>4</b></div>
  </div>
</footer>
</body>
</html>
```
FILE: styles.css
```
*{box-sizing:border-box}
html,body{margin:0;padding:0}
body{width:2560px;height:1440px;overflow:hidden;background:#444;font-family:"Open Sans","Noto Sans",sans-serif;font-size:21px;color:#c8c8c8;position:relative}
svg{display:block;flex:none;overflow:visible}
.defs{position:absolute}
i,em{font-style:normal}
.mayam{font:700 36px "Liberation Sans",sans-serif;fill:#fff;text-anchor:middle}
.mayaa{font:700 13px "Liberation Sans",sans-serif;fill:#fff;text-anchor:middle}

/* title */
.title{height:45px;background:#fff;display:flex;align-items:center;padding-left:3px;color:#000;position:relative}
.title-logo{margin-right:4px}
.title-text{font-size:23px;white-space:nowrap;letter-spacing:-.1px}
.winbtns{margin-left:auto;display:flex;gap:71px;padding-right:39px}
.tabstrip{position:absolute;top:0;left:1039px;display:flex;height:2px}
.strip-a{width:96px;background:#00b7c3}
.strip-b{width:386px;background:#e4e4e4}

/* menu */
.menubar{height:55px;display:flex;align-items:center;padding-left:16px}
.menus{display:flex;gap:30.300px;margin-left:25px;width:1967px;margin-top:4px}
.home{margin-top:1px}
.ws-label{color:#c0c0c0;margin-top:0}
.combo{display:flex;background:#5a5a5a;border-radius:2px;color:#c0c0c0;align-items:center}
.combo span{flex:1;padding-left:7px}
.combo b{display:flex;align-items:center;justify-content:center;align-self:stretch;border-left:1px solid #4a4a4a}
.ws{width:344px;height:35px;margin-left:8px;margin-top:-3px}
.ws b{width:39px}
.lock{margin-left:20px;margin-top:-1px}
.tri{display:block;width:0;height:0;border-left:9px solid transparent;border-right:9px solid transparent;border-top:15px solid #bdbdbd}
.tri.small{border-left-width:7px;border-right-width:7px;border-top-width:12px;border-top-color:#8c8c8c}
.tri.light{border-left-width:10px;border-right-width:10px;border-top-width:9px;border-top-color:#ddd}
.tri.hollow{border-top-color:#777}

/* status */
.status{height:53px;display:flex;align-items:center;padding:1px 0 0 5px}
.grip{display:block;width:8px;height:44px;background-image:radial-gradient(circle,#777 1px,transparent 1.2px);background-size:4px 6px;flex:none}
.grip.tall{height:125px}
.grip.short{height:56px}
.mode{width:198px;height:41px;margin-left:11px}
.mode span{padding-left:7px}
.mode b{width:39px}
.slots{display:flex;align-items:center}
.s{width:45.4px;height:44px;display:flex;align-items:center;justify-content:center;flex:none;border-radius:2px}
.s.on{background:#5285a6}
.slots.b .s{width:45.6px}
.slots.c .s{width:45.7px}
.s.wide{width:44px!important;margin-left:1px}
.box{border:1px solid #555;border-radius:2px;color:#c0c0c0;padding-left:11px;display:flex;align-items:center;white-space:nowrap}
.nolive{width:200px;height:43px;margin-left:-3px;border-color:#3a3a3a}
.slot-sep{width:50px;display:flex;justify-content:center}
.objx{width:198px;height:42px;margin-left:13px;background:#5285a6;border-color:#5285a6;color:#2e3a48;padding-left:8px}
.status>.tri{margin-left:8px}
.user{width:170px;height:44px;margin-left:2px;background:#575757;display:flex;align-items:center;padding-left:7px;gap:8px;color:#ddd;white-space:nowrap;overflow:hidden}
.rule{height:4px;background:#383838}

/* shelf */
.shelf{height:131px;display:flex;padding:2px 0 0 5px;background:#444}
.shelf-side{width:40px;margin:0 0 3px 13px;background:#383838;display:flex;flex-direction:column;align-items:center;justify-content:space-between;padding:22px 0 23px}
.shelf-main{flex:1;margin-left:4px;display:flex;flex-direction:column}
.tabs{height:37px;background:#363636;display:flex;padding-left:5px;gap:5.200px;align-items:flex-end}
.tab{height:33px;padding:0 21px;background:#383838;border:1px solid #444;border-bottom:0;border-radius:3px 3px 0 0;color:#909090;line-height:34px;white-space:nowrap}
.tab.on{background:#444;color:#e0e0e0;border-color:#444;padding:0 19.500px}
.shelf-body{flex:1;display:flex;justify-content:space-between;align-items:center;padding-right:8px}
.shelf-icons{display:flex;padding:2px 0 0 8px;align-self:flex-start}
.sh{width:70px;height:76px;display:flex;flex-direction:column;align-items:center;justify-content:center}
.sh.tool{justify-content:flex-start;padding-top:6px}
.sh.tool b{display:block;width:64px;height:26px;flex:none;background:#2b2b2b;border-radius:2px;font:700 18px/26px "Open Sans",sans-serif;color:#d8d8d8;text-align:center}
.shelf-scroll{width:28px;height:76px;background:#383838;display:flex;flex-direction:column;align-items:center;justify-content:space-between;padding:7px 0;margin-top:-4px;margin-right:-2px}
.shelf-scroll b{display:block;width:22px;height:27px;background:#5a5a5a;border-radius:8px}
.up{display:block;width:0;height:0;border-left:9px solid transparent;border-right:9px solid transparent;border-bottom:10px solid #bdbdbd}
.down{display:block;width:0;height:0;border-left:9px solid transparent;border-right:9px solid transparent;border-top:10px solid #bdbdbd}
.left{display:block;width:0;height:0;border-top:8px solid transparent;border-bottom:8px solid transparent;border-right:9px solid #bdbdbd}
.right{display:block;width:0;height:0;border-top:8px solid transparent;border-bottom:8px solid transparent;border-left:9px solid #bdbdbd}

/* main */
.main{height:858px;display:flex;background:#383838;padding-top:6px}
.toolbox{width:84px;background:#444;display:flex;flex-direction:column;align-items:center;padding-top:4px;margin-top:-6px}
.grip-h{width:78px;height:4px;margin-bottom:19px;background-image:radial-gradient(circle,#777 1px,transparent 1.2px);background-size:6px 4px}
.tool-cell{width:72px;height:72.6px;flex:none;display:flex;align-items:center;justify-content:center;border-radius:2px}
.tool-cell.on{background:#5285a6}
.uni{margin-top:66px}
.tool-rule{width:72px;height:1px;background:#aaa;margin-top:17px;flex:none}
.objmode{width:59px;height:58px;margin-top:18px;background:#bdbdbd;border:5px solid #bdbdbd;outline:2px solid #444;outline-offset:-7px;display:flex;align-items:center;justify-content:center;flex:none}
.objmode svg{filter:brightness(.3)}
.quad{display:grid;grid-template-columns:26px 26px;gap:3px 4px;margin-top:15px;flex:none}
.quad span{height:26px;border:2px solid #999;display:flex;align-items:center;justify-content:center}
.quad span svg{width:14px;height:12px}
.quad .lit{background:#bdbdbd;border-color:#bdbdbd}
.logo{margin-top:14px}

.outliner{width:266px;height:846px;flex:none;margin:3px 0 0 4px;display:flex;flex-direction:column}
.ol-tab{width:120px;height:32px;margin-left:4px;background:#444;border-radius:3px 3px 0 0;color:#e0e0e0;padding-left:21px;line-height:33px}
.ol-panel{flex:1;background:#444;display:flex;flex-direction:column;padding:0 6px 15px}
.ol-menu{height:50px;display:flex;align-items:center;gap:28px;padding:0 0 4px 15px}
.ol-menu em{margin-left:auto;color:#555;margin-right:-4px;font-size:16px}
.ol-search{height:38px;display:flex;align-items:center;gap:15px;padding-left:8px;margin-top:1px}
.searchbox{width:198px;height:37px;background:#2b2b2b;display:flex;align-items:center;justify-content:space-between;padding:0 5px 0 3px;color:#777}
.ol-list{flex:1;margin-top:8px;background:#383838;display:grid;grid-template-columns:1fr 22px;grid-template-rows:1fr 25px;min-height:0}
.rows{list-style:none;margin:0;padding:2px 0 0 68px;overflow:hidden;width:230px}
.rows li{height:39.9px;display:flex;align-items:center;position:relative;white-space:nowrap;color:#c4c4c4;line-height:1}
.rows li span{position:absolute;left:39px}
.rows li svg{margin-left:1px}
.rows .dim{color:#7a7a7a}
.vscroll{display:flex;flex-direction:column;align-items:center;padding-top:6px}
.vscroll b{display:block;width:22px;height:629px;margin-top:9px;background:#5a5a5a;border-radius:8px}
.vscroll .down{margin-top:3px}
.hscroll{grid-column:1/3;display:flex;align-items:center;padding:0 33px 0 7px}
.hscroll b{display:block;width:143px;height:22px;margin-left:9px;background:#5a5a5a;border-radius:8px}
.hscroll .right{margin-left:46px}

.viewpanel{width:1711px;height:847px;margin:2px 4px 0 4px;background:#444;border:1px solid #8a8a8a;display:flex;flex-direction:column;position:relative;flex:none}
.vp-menu{height:43px;display:flex;gap:30px;align-items:center;padding-left:19px}
.vp-tools{height:38px;display:flex;align-items:center;padding-left:1px;flex:none;position:relative}
.d{width:20px;display:flex;justify-content:center;flex:none}
.v{width:38px;height:36px;display:flex;align-items:center;justify-content:center;flex:none;border-radius:2px}
.v.on{background:#5285a6}
.v.off{outline:1px solid #333;outline-offset:-1px;background:#444}
.lit{position:relative}
.vp-tools .lit::before,.vp-tools .lit::after{content:"";position:absolute;top:0;bottom:0;width:6px;border:2px solid #15e515}
.vp-tools .lit::before{left:0;border-right:0}
.vp-tools .lit::after{right:0;border-left:0}
.v.dark svg{background:#3a3a3a;box-shadow:0 0 0 4px #3a3a3a}
.val{width:78px;height:30px;margin-left:4px;background:#2b2b2b;border-radius:2px;display:flex;align-items:center;padding-left:9px;color:#bbb;font-size:20px;flex:none}
.v.half{width:44px;margin-left:0}
.val+.v.half{margin-left:-4px;margin-right:0}
.onbtn{width:36px;height:36px;margin-left:5px;background:#5285a6;display:flex;align-items:center;justify-content:center;border-radius:2px;flex:none}
.aces{width:177px;height:35px;margin-left:4px;background:#5a5a5a;overflow:hidden;white-space:nowrap;padding-left:7px;line-height:34px;border-radius:2px 0 0 2px;color:#bbb;flex:none}
.ipr{font:700 14px "Liberation Sans",sans-serif;fill:#333;text-anchor:middle}
.tee{font:700 17px "Liberation Serif",serif;fill:#48a9b8;text-anchor:middle}
.ontxt{font:700 12px "Liberation Sans",sans-serif;fill:#333;text-anchor:middle}
.view{height:764px;background:#5d5d5d;position:relative;overflow:hidden;flex:none}
.scene{position:absolute;left:0;top:0}
.hz path{stroke:#4d4d4d;stroke-width:1.200;fill:none}
.hz .thick{stroke:#444;stroke-width:2.500}
.rad path{stroke:#4d4d4d;stroke-width:1;fill:none}
.axis-g{stroke:#1d5a30;stroke-width:1.500;fill:none}
.axis-k{stroke:#444;stroke-width:2;fill:none}
.k{fill:#000}
.r{fill:#a00005;stroke:#000070;stroke-width:1;vector-effect:non-scaling-stroke}
.n{fill:none;stroke:#000070;stroke-width:1;vector-effect:non-scaling-stroke}
.faint{stroke:#7c2028;stroke-width:1;fill:none}
.cube-arrows path{fill:#e0e0e0}
.cube-arrows .gr{fill:#bdbdbd}
.cube-arrows .ln{fill:none;stroke:#bdbdbd;stroke-width:6}
.cube-arrows .ring{fill:none;stroke:#d8d8d8;stroke-width:4}
.ringc{fill:none;stroke:#d8d8d8;stroke-width:2}
.ax-x{fill:#e00000;font:700 17px "Liberation Sans",sans-serif}
.ax-y{fill:#00d000;font:700 15px "Liberation Sans",sans-serif}
.ax-z{fill:#1e40d0;font:700 15px "Liberation Sans",sans-serif}
.ax-gl{stroke:#00c000;stroke-width:1.500}
.sym{position:absolute;left:738px;top:40px;font:700 20px "Liberation Sans",sans-serif;color:#fff;white-space:nowrap}
.cube{position:absolute;left:1543px;top:64px;width:100px;height:101px;border:2.500px solid #6e6e6e;background:linear-gradient(#fff,#cdcdcd);display:flex;align-items:center;justify-content:center}
.cube span{font:600 19px "Open Sans",sans-serif;color:#2e3648;letter-spacing:.5px}

.rightpanel{width:445px;margin-top:-1px;margin-left:5px;display:flex;flex-direction:column;background:#444;height:853px;flex:none}
.cb{height:556px;display:flex;flex-direction:column;position:relative;flex:none}
.cb-icons{display:flex;justify-content:flex-end;gap:16px;padding:9px 8px 0 0;height:45px;flex:none}
.cb-menu{display:flex;gap:30px;padding-left:19px;height:38px;align-items:center;margin-top:1px;flex:none}
.cb-msg{margin:186px 0 0;text-align:center;font-weight:600;font-size:21.300px;line-height:30.500px;color:#c0c0c0;width:443px}
.cb-dots{position:absolute;left:190px;top:541px;width:102px;height:3px;background-image:radial-gradient(circle,#777 1px,transparent 1.2px);background-size:5px 3px}
.layers{flex:1;background:#383838;margin:2px 3px 5px 3px;display:flex;flex-direction:column;padding:4px 4px 3px 3px;min-height:0}
.lay-tabs{height:32px;display:flex;gap:4px;flex:none}
.ltab{padding:0 20px;background:#383838;color:#808080;border:1px solid #444;border-bottom:0;border-radius:3px 3px 0 0;line-height:30px}
.ltab.on{background:#444;color:#e0e0e0;width:112px}
.lay-panel{flex:1;background:#444;display:flex;flex-direction:column;min-height:0}
.lay-menu{height:46px;display:flex;gap:30px;padding-left:16px;align-items:center;flex:none}
.lay-icons{height:46px;margin-bottom:3px;display:flex;align-items:center;justify-content:flex-end;gap:22px;padding-right:11px;flex:none}
.lay-list{height:132px;background:#2b2b2b;flex:none;margin-right:1px}
.lay-scroll{height:24px;display:flex;align-items:center;background:#383838;padding-left:8px;margin-right:1px;flex:none}
.lay-scroll b{display:block;width:232px;height:22px;margin-left:8px;background:#5a5a5a;border-radius:8px}
.lay-scroll .right{margin-left:auto;margin-right:8px}

.vtabs{width:37px;margin-top:-2px;display:flex;flex-direction:column;align-items:center;padding-top:26px}
.vt{writing-mode:vertical-rl;color:#8c8c8c;white-space:nowrap;line-height:1;margin-left:2px}
.vt.on{color:#d8d8d8;margin-bottom:50px}
.vt+.vt+.vt{margin-top:47px}

/* time */
.timerow{height:76px;margin-top:4px;background:#444;display:flex;align-items:center;padding-left:5px}
.slider{width:1948px;height:64px;margin-left:11px;background:#2b2b2b;display:flex;overflow:hidden;padding-left:11px;flex:none}
.cur{width:14px;background:#555;margin-right:49px;color:#eee;flex:none;display:flex;align-items:flex-end;justify-content:center;padding-bottom:4px;font-size:20px}
.tk{width:80.35px;flex:none;display:flex;flex-direction:column}
.tk b{font-weight:400;color:#8c8c8c;margin-left:4px;line-height:20px;margin-top:5px;height:25px;white-space:nowrap;font-size:20px}
.tk i{display:block;width:2.500px;height:34px;margin-top:auto;background:#8a8a8a}
.fld{background:#2b2b2b;border-radius:2px;color:#c0c0c0;display:flex;align-items:center;padding-left:10px;flex:none;font-size:20px}
.curframe{width:178px;height:38px;margin-left:13px}
.transport{display:flex;margin-left:13px}
.p{width:46px;display:flex;justify-content:center;align-items:center}
.rangerow{height:66px;margin-top:4px;background:#444;display:flex;align-items:center;padding-left:5px}
.w178{width:178px;height:52px;margin-left:14px}
.grip+.w178{margin-left:12px}
.rangewrap{width:603px;height:50px;margin:0 0 0 13px;background:#383838;padding:3px;flex:none}
.rangebar{width:379px;height:41px;background:#5d5d5d;border-radius:3px;display:flex;align-items:center;padding:0 10px 0 7px;color:#c0c0c0;gap:11px;font-size:20px}
.rangebar .end{margin-left:auto;margin-right:-4px}
.hnd{display:block;width:25px;height:28px;background:#8c8c8c;border-radius:3px;flex:none}
.rangewrap+.fld{margin-left:13px}
.rs{flex:none;display:flex;justify-content:center;align-items:center}
.gap10{width:20px}
.mark{width:68px;padding-left:6px}
.tri-s{width:53px;padding-left:6px}
.rs .tri.small{border-top-color:#7c7c7c}
.charset{width:203px;height:49px;flex:none}
.tri-s2{width:55px;padding-left:10px}
.sep3{width:44px}
.fps{width:159px;height:35px;margin-left:2px}
.fps b{width:39px}
.rs2{width:56.500px;display:flex;justify-content:center;flex:none}
.rs2.first{margin-left:13px}
.rs2.short{width:32px}
.loop1{font:700 16px "Liberation Sans",sans-serif;fill:#333;text-anchor:middle}

.cmdrow{height:60px;margin-top:4px;background:#444;display:flex;align-items:center;padding-left:5px}
.help{margin-left:13px}
.hint{font-size:19px;margin-left:16px;color:#e0e0e0;width:300px;white-space:nowrap}
.cmd-split{height:60px;width:44px;margin-left:713px;display:flex;border-left:6px solid #383838;padding-left:1px}
.cmd-split .inrow{height:60px;background-size:6px 7px}
.mel{margin-left:6px;width:68px;color:#e0e0e0;flex:none}
.cmd-in{width:636px;height:46px;background:#2b2b2b;border-radius:2px;flex:none}
.cmd-out{width:639px;height:40px;margin-left:16px;background:#2b2b2b;flex:none}
.script{margin-left:11px}
.brace{font:700 22px "Liberation Mono",monospace;fill:#333;text-anchor:middle}

/* taskbar */
.taskbar{height:80px;background:linear-gradient(90deg,#e8eef5,#e4e9f1);display:flex;position:relative;color:#000;align-items:stretch}
.win{margin:22px 0 0 32px}
.tsearch{width:686px;margin-left:33px;background:#fff;border:2px solid #ccc;border-bottom-width:3px;display:flex;align-items:center;padding-left:21px;position:relative}
.tsearch span{font-size:28px;margin-left:23px;color:#1a1a1a;margin-top:2px}
.illus{position:absolute;right:-2px;top:-2px}
.chrome{width:48px;height:48px;border-radius:50%;background:conic-gradient(#ea4335 0 80deg,#fbbc05 80deg 205deg,#34a853 205deg 320deg,#ea4335 320deg);display:flex;align-items:center;justify-content:center;position:relative;flex:none}
.chrome i{display:block;width:22px;height:22px;border-radius:50%;background:#3a7ff0;border:3px solid #fff}
.chrome em{position:absolute;right:-4px;bottom:-6px;width:24px;height:34px;border-radius:50%;background:radial-gradient(circle at 50% 40%,#d8b890,#5a4434)}
.chrome.big{margin:21px 0 0 27px}
.task{display:flex;align-items:center;padding-top:6px;border-bottom:4px solid #00b7c3;flex:none;font-size:22.800px;white-space:nowrap}
.gk{width:226px;margin-left:31px;padding-left:9px;gap:4px}
.active{width:241px;margin-left:10px;padding-left:18px;gap:6px;background:#f4f6fa}
.cr{width:224px;margin-left:10px;padding-left:8px;gap:5px}
.cr .chrome{margin-top:2px}
.tray{flex:1;position:relative;display:flex;align-items:center}
.tray svg,.tray span,.tray div{flex:none}
.weather{margin-left:64px;margin-top:-3px}
.temp{font-size:27px;margin-left:15px;width:60px;white-space:nowrap;margin-top:-2px}
.caret{margin-left:37px;margin-top:-6px}
.ti{margin-top:-2px}
.t1{margin-left:34px}
.t2{margin-left:32px}
.t3{margin-left:30px}
.t4{margin-left:36px}
.t5{margin-left:36px}
.t6{margin-left:36px}
.t7{margin-left:33px}
.clock{margin-left:18px;width:130px;display:flex;flex-direction:column;align-items:center;font-size:22.500px;line-height:36px;color:#111}
.notif{margin-left:30px;position:relative}
.notif b{position:absolute;left:13px;top:16px;width:32px;height:32px;border-radius:50%;background:#c0c4c8;border:2px solid #555;font:400 24px/28px "Open Sans",sans-serif;text-align:center;color:#000}
```
